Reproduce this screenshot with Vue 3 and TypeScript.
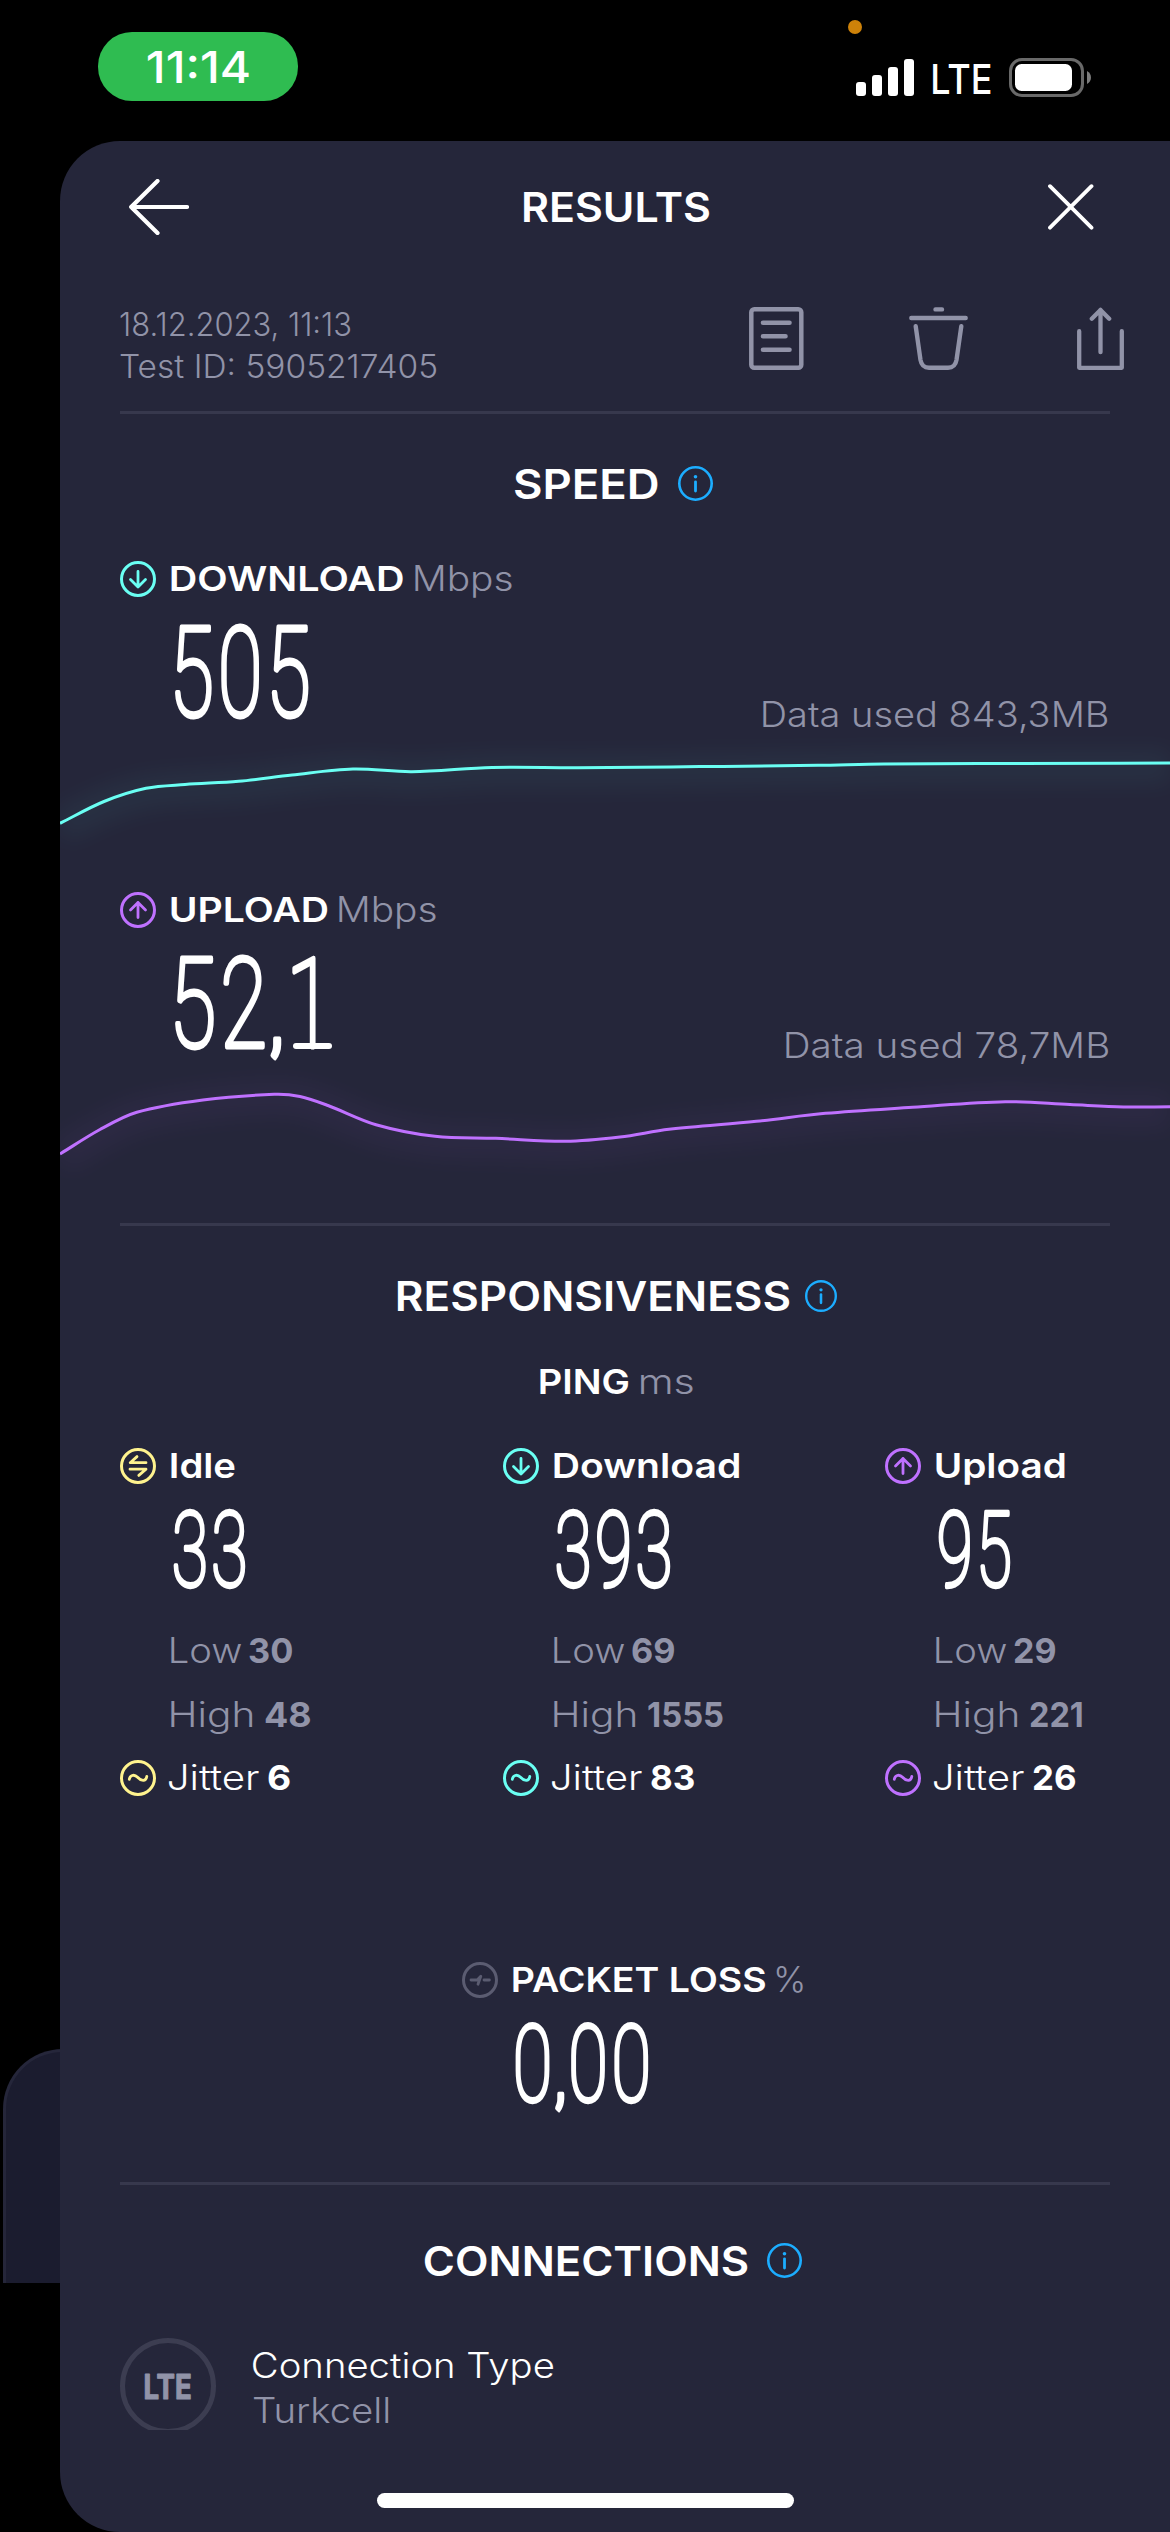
<script setup lang="ts">
import { h, type FunctionalComponent } from 'vue'

interface FitProps {
  text: string
  w: number
  cap: number
  weight?: number
  outline?: number
}

const SANS = 'Inter, "Open Sans", sans-serif'
const DIGITS = 'Roboto, Inter, sans-serif'

const pen = document.createElement('canvas').getContext('2d')!

// One line of text whose inked width is w and whose capitals are cap pixels high.
const FitText: FunctionalComponent<FitProps> = (props) => {
  const weight = props.weight ?? 400
  const size = props.cap / 0.727
  pen.font = `${weight} ${size}px ${SANS}`
  const m = pen.measureText(props.text)
  const ratio = props.w / (m.actualBoundingBoxRight + m.actualBoundingBoxLeft)
  return h(
    'svg',
    { width: props.w, height: props.cap, overflow: 'visible', style: 'display:block;flex:none' },
    [
      h(
        'text',
        {
          transform: `translate(${m.actualBoundingBoxLeft * ratio} ${props.cap}) scale(${ratio} 1)`,
          'font-family': SANS,
          'font-size': size,
          'font-weight': weight,
          fill: 'currentColor',
          stroke: props.outline ? 'currentColor' : 'none',
          'stroke-width': props.outline ?? 0,
          'stroke-linejoin': 'round',
        },
        props.text,
      ),
    ],
  )
}
FitText.props = ['text', 'w', 'cap', 'weight', 'outline']

// Tall condensed figures with rounded stroke ends and a short decimal comma.
const BigNumber: FunctionalComponent<{ text: string; w: number; cap: number; pen: number }> = (props) => {
  const edge = props.pen
  const size = (props.cap - edge) / 0.711
  const spacing = size * 0.05
  const runs = props.text.split(/(,)/).map((t) => ({
    t,
    comma: t === ',',
    size: t === ',' ? size * 0.62 : size,
    weight: t === ',' ? 400 : 100,
  }))
  let advance = 0
  let left = 0
  let right = 0
  runs.forEach((r, i) => {
    pen.font = `${r.weight} ${r.size}px ${DIGITS}`
    const m = pen.measureText(r.t)
    advance += m.width + spacing * r.t.length
    if (i === 0) left = -m.actualBoundingBoxLeft
    right = m.width - m.actualBoundingBoxRight + spacing
  })
  const ratio = (props.w - edge) / (advance - left - right)
  return h(
    'svg',
    { width: props.w, height: props.cap, overflow: 'visible', style: 'display:block;flex:none' },
    [
      h(
        'text',
        {
          transform: `translate(${edge / 2 - left * ratio} ${props.cap - edge / 2}) scale(${ratio} 1)`,
          'font-family': DIGITS,
          'font-size': size,
          'letter-spacing': spacing,
          fill: 'currentColor',
          stroke: 'currentColor',
          'stroke-width': edge,
          'stroke-linejoin': 'round',
          'vector-effect': 'non-scaling-stroke',
        },
        runs.map((r) =>
          h('tspan', { 'font-size': r.size, 'font-weight': r.weight, 'vector-effect': 'non-scaling-stroke' }, r.t),
        ),
      ),
    ],
  )
}
BigNumber.props = ['text', 'w', 'cap', 'pen']

type IconKind = 'down' | 'up' | 'idle' | 'jitter' | 'loss'
const glyphs: Record<IconKind, string> = {
  down: 'M18 10.5V26M10.5 18.5L18 26L25.5 18.5',
  up: 'M18 25.5V10.5M10.5 18L18 10.5L25.5 18',
  idle: 'M26 14.7H10.2L17 8.6M10 21.2H26L18.8 27.4',
  jitter: 'M9.3 19.3C9.8 15.6 13.8 13.4 17.6 17.3C21.6 21.7 26 21.6 26.8 16.4',
  loss: 'M9 18H15.2L18.8 14.2L16 22.2M22 18H27.4',
}
const CircleIcon: FunctionalComponent<{ kind: IconKind }> = (props) =>
  h(
    'svg',
    {
      width: 36, height: 36, viewBox: '0 0 36 36', fill: 'none', stroke: 'currentColor',
      'stroke-width': 3, 'stroke-linecap': 'round', 'stroke-linejoin': 'round',
      style: 'display:block;flex:none',
    },
    [h('circle', { cx: 18, cy: 18, r: 16.5 }), h('path', { d: glyphs[props.kind], 'stroke-width': 2.8 })],
  )
CircleIcon.props = ['kind']

const InfoIcon: FunctionalComponent<{ size: number }> = (props) =>
  h(
    'svg',
    { width: props.size, height: props.size, viewBox: '0 0 35 35', style: 'display:block;flex:none' },
    [
      h('circle', { cx: 17.5, cy: 17.5, r: 16.2, fill: 'none', stroke: '#1cadff', 'stroke-width': 2.6 }),
      h('circle', { cx: 17.5, cy: 10.7, r: 1.8, fill: '#1cadff' }),
      h('path', { d: 'M17.5 15.8V25', stroke: '#1cadff', 'stroke-width': 2.8, 'stroke-linecap': 'round' }),
    ],
  )
InfoIcon.props = ['size']

type Point = [number, number]

function smooth(points: Point[]): string {
  let d = `M${points[0][0]} ${points[0][1]}`
  for (let i = 0; i < points.length - 1; i++) {
    const a = points[Math.max(i - 1, 0)]
    const b = points[i]
    const c = points[i + 1]
    const e = points[Math.min(i + 2, points.length - 1)]
    const third = (c[0] - b[0]) / 3
    const sb = i === 0 ? (c[1] - b[1]) / (c[0] - b[0]) : (c[1] - a[1]) / (c[0] - a[0])
    const sc = (e[1] - b[1]) / (e[0] - b[0])
    d += `C${b[0] + third} ${b[1] + sb * third} ${c[0] - third} ${c[1] - sc * third} ${c[0]} ${c[1]}`
  }
  return d
}

const speeds = [
  {
    name: 'DOWNLOAD', nameW: 232.5, kind: 'down' as IconKind, tone: 'cyan', value: '505', valueW: 135, foot: false,
    used: 'Data used 843,3MB', usedW: 345,
    path: smooth([[0, 88.3], [44, 66.5], [86, 53.3], [125, 49.5], [178.6, 46.3], [232, 40], [292.9, 34], [351.8, 36.7], [432, 32.5], [518, 32.7], [640, 31.6], [758, 30.3], [823.5, 28.9], [960, 28.4], [1110, 28]]),
  },
  {
    name: 'UPLOAD', nameW: 157, kind: 'up' as IconKind, tone: 'purple', value: '52,1', valueW: 142, foot: true,
    used: 'Data used 78,7MB', usedW: 322.5,
    path: smooth([[0, 88], [40, 63.5], [76.8, 46.3], [142.9, 34], [214.3, 28.3], [240, 30.5], [268, 39.5], [316, 58.7], [375, 70.3], [435.7, 72.3], [505.4, 75.3], [560, 71], [609, 63.3], [696.3, 55.3], [765.4, 47.3], [852.6, 41.3], [945.3, 35.7], [1010, 38.6], [1063.5, 41], [1110, 40.7]]),
  },
]

const pings = [
  { name: 'Idle', nameW: 64.5, kind: 'idle' as IconKind, tone: 'yellow', value: '33', valueW: 73, low: '30', lowW: 43, high: '48', highW: 45, jitter: '6', jitterW: 21.5 },
  { name: 'Download', nameW: 185.5, kind: 'down' as IconKind, tone: 'cyan', value: '393', valueW: 115, low: '69', lowW: 42, high: '1555', highW: 75, jitter: '83', jitterW: 43 },
  { name: 'Upload', nameW: 129, kind: 'up' as IconKind, tone: 'purple', value: '95', valueW: 73, low: '29', lowW: 41, high: '221', highW: 52, jitter: '26', jitterW: 42 },
]
</script>

<template>
  <div class="screen">
    <div class="drawer"></div>
    <header class="status">
      <div class="clock"><FitText text="11:14" :w="101" :cap="32" :weight="500" /></div>
      <i class="mic"></i>
      <svg class="signal" width="58" height="37" fill="#fff">
        <rect y="23" width="10" height="14" rx="3" />
        <rect x="16" y="16" width="10" height="21" rx="3" />
        <rect x="32" y="8" width="10" height="29" rx="3" />
        <rect x="48" width="10" height="37" rx="3" />
      </svg>
      <FitText class="carrier" text="LTE" :w="58" :cap="29.7" :weight="500" />
      <svg class="battery" width="82" height="39">
        <rect x="1.5" y="1.5" width="72" height="36" rx="11.5" fill="none" stroke="#696969" stroke-width="3" />
        <rect x="6" y="6" width="57" height="27" rx="6.5" fill="#fff" />
        <path d="M78 13C83.3 15.5 83.3 23.5 78 26Z" fill="#7d7d7d" />
      </svg>
    </header>

    <main class="sheet">
      <div class="content">
        <div class="titlebar">
          <svg width="60" height="56" class="line-icon"><path d="M28.5 2L2.2 28L28.5 54M2.2 28H58" stroke-width="4.2" /></svg>
          <FitText class="title" text="RESULTS" :w="186.5" :cap="29.6" :weight="600" />
          <svg width="46" height="46" class="line-icon close"><path d="M2 2.2L43.5 43.7M43.5 2.2L2 43.7" stroke-width="3.8" /></svg>
        </div>

        <div class="meta">
          <div class="stamp">
            <FitText text="18.12.2023, 11:13" :w="230.5" :cap="23.3" :weight="350" />
            <FitText text="Test ID: 5905217405" :w="316" :cap="23.3" :weight="350" />
          </div>
          <svg width="55" height="63" class="line-icon doc"><rect x="2.3" y="2.3" width="50" height="58.4" rx="3" stroke-width="4.5" /><path d="M14 15.7H40.5M14 29.2H36.5M14 42.7H40.5" stroke-width="4.6" /></svg>
          <svg width="59" height="63" class="line-icon trash"><path d="M26.5 2.4H33M2.3 11H56.7M6.7 19.3L11.5 53Q12.8 60.7 20 60.7H39Q46.2 60.7 47.5 53L52.3 19.3" stroke-width="4.4" /></svg>
          <svg width="47" height="63" class="line-icon share"><path d="M2.2 24.2V60.8H44.8V24.2M23.5 3V45.2M14.8 11.8L23.5 2.9L32.2 11.8" stroke-width="4.3" /></svg>
        </div>
        <hr />

        <div class="heading speed-heading">
          <FitText text="SPEED" :w="144" :cap="29.6" :weight="600" />
          <InfoIcon :size="35" />
        </div>

        <section v-for="s in speeds" :key="s.name" class="speed">
          <div class="label">
            <CircleIcon :kind="s.kind" :class="s.tone" />
            <FitText class="name" :text="s.name" :w="s.nameW" :cap="25.2" :weight="600" />
            <FitText class="unit" text="Mbps" :w="96.5" :cap="25.2" :weight="300" />
          </div>
          <div class="reading">
            <div class="big" :class="{ foot: s.foot }"><BigNumber :text="s.value" :w="s.valueW" :cap="92" :pen="4.2" /></div>
            <FitText class="used" :text="s.used" :w="s.usedW" :cap="25.2" :weight="300" />
          </div>
          <svg class="chart" :class="s.tone" width="1110" height="150" viewBox="0 0 1110 150" fill="none" stroke="currentColor">
            <path class="glow" :d="s.path" transform="translate(0 4)" />
            <path :d="s.path" stroke-width="3" />
          </svg>
        </section>
        <hr />

        <div class="heading resp-heading">
          <FitText text="RESPONSIVENESS" :w="392.5" :cap="29.6" :weight="600" />
          <InfoIcon :size="32" />
        </div>
        <div class="ping-heading">
          <FitText text="PING" :w="89" :cap="25.2" :weight="600" />
          <FitText class="unit" text="ms" :w="52.5" :cap="25.2" :weight="300" />
        </div>

        <div class="pings">
          <section v-for="p in pings" :key="p.name">
            <div class="label">
              <CircleIcon :kind="p.kind" :class="p.tone" />
              <FitText class="name" :text="p.name" :w="p.nameW" :cap="25.2" :weight="600" />
            </div>
            <BigNumber class="value" :text="p.value" :w="p.valueW" :cap="78" :pen="3.7" />
            <div class="stat low"><FitText text="Low" :w="70" :cap="25.2" :weight="300" /><FitText :text="p.low" :w="p.lowW" :cap="25.2" :weight="700" /></div>
            <div class="stat high"><FitText text="High" :w="81.5" :cap="25.2" :weight="300" /><FitText :text="p.high" :w="p.highW" :cap="25.2" :weight="700" /></div>
            <div class="label jitter">
              <CircleIcon kind="jitter" :class="p.tone" />
              <FitText class="jit" text="Jitter" :w="90" :cap="25.2" :weight="350" />
              <FitText class="jitval" :text="p.jitter" :w="p.jitterW" :cap="25.2" :weight="700" />
            </div>
          </section>
        </div>

        <section class="loss">
          <div class="label">
            <CircleIcon kind="loss" class="dim" />
            <FitText class="name" text="PACKET LOSS" :w="252" :cap="25.2" :weight="600" />
            <FitText class="unit" text="%" :w="26.7" :cap="25.2" :weight="300" />
          </div>
          <BigNumber class="value" text="0,00" :w="134" :cap="78.5" :pen="3.7" />
        </section>
        <hr />

        <div class="heading conn-heading">
          <FitText text="CONNECTIONS" :w="322.5" :cap="29.6" :weight="600" />
          <InfoIcon :size="35" />
        </div>
        <div class="connection">
          <div class="badge-clip">
            <div class="badge"><FitText text="LTE" :w="46" :cap="25" :weight="700" :outline="1.2" /></div>
          </div>
          <div class="carrier-info">
            <FitText text="Connection Type" :w="300.7" :cap="25.2" :weight="350" />
            <FitText class="provider" text="Turkcell" :w="136" :cap="25.2" :weight="300" />
          </div>
        </div>
      </div>
      <div class="home"></div>
    </main>
  </div>
</template>

<style>
body { background: #000; }
</style>

<style scoped>
.screen { position: relative; width: 1170px; height: 2532px; overflow: hidden; background: #000; color: #fff; }
.status { display: flex; height: 141px; position: relative; box-sizing: border-box; padding-left: 98px; }
.clock { width: 200px; height: 69px; margin-top: 32px; border-radius: 34px; background: #2fbc51; display: flex; align-items: center; justify-content: center; }
.mic { position: absolute; left: 848px; top: 20px; width: 14px; height: 14px; border-radius: 50%; background: #cd8209; }
.signal { margin: 59px 0 0 558px; }
.carrier { margin: 64px 0 0 19px; }
.battery { margin: 58px 0 0 18px; }
.drawer { position: absolute; left: 3px; top: 2049px; width: 120px; height: 234px; box-sizing: border-box; border: 3px solid #25263a; border-bottom: 0; border-radius: 60px 0 0 0; background: #1b1c2f; }
.sheet { position: relative; width: 1110px; height: 2391px; margin-left: 60px; background: #25263a; border-radius: 60px 0 0 60px; overflow: hidden; }
.content { height: 2289px; }
.line-icon { display: block; flex: none; fill: none; stroke: currentColor; stroke-linecap: round; stroke-linejoin: round; }
.titlebar { display: flex; align-items: center; height: 132px; padding: 0 76px 0 69px; }
.title { margin-left: 334px; }
.close { margin-left: auto; }
.meta { display: flex; height: 138px; box-sizing: border-box; padding: 34px 46px 0 60px; color: #9193a8; }
.stamp { width: 629px; display: flex; flex-direction: column; gap: 19px; padding-top: 6px; }
.trash { margin-left: 105px; }
.share { margin-left: 109px; }
hr { height: 3px; margin: 0 60px; border: 0; background: #37384d; }
.heading { display: flex; align-items: center; }
.speed-heading { height: 35px; margin: 52px 0 60px 454px; gap: 20px; }
.speed { height: 331px; }
.label { display: flex; align-items: center; height: 36px; padding-left: 60px; }
.name { margin-left: 15px; }
.unit { margin-left: 11px; color: #9193a8; }
.reading { display: flex; justify-content: space-between; height: 138px; padding: 0 62px 0 114px; }
.big { position: relative; height: 92px; margin-top: 29px; }
.foot::after { content: ""; position: absolute; left: 119px; top: 86px; width: 39px; height: 6px; border-radius: 3px; background: #fff; }
.used { margin-top: 105px; color: #9193a8; }
.chart { display: block; }
.glow { stroke-width: 34px; opacity: .045; filter: blur(11px); }
.cyan { color: #6afff3; }
.purple { color: #bf71ff; }
.yellow { color: #fff38e; }
.dim { color: #5b5c71; }
.resp-heading { height: 32px; margin: 54px 0 0 337px; gap: 15px; }
.ping-heading { display: flex; height: 25px; margin: 57px 0 0 480px; }
.pings { display: grid; grid-template-columns: 383px 382px 1fr; margin-top: 54px; }
.value { margin: 26px 0 0 113px; }
.stat { display: flex; height: 25px; margin-left: 111px; color: #9193a8; }
.low { margin-top: 50px; gap: 8px; }
.high { margin-top: 39px; gap: 12px; }
.jitter { margin-top: 33px; }
.jit { margin-left: 13px; }
.jitval { margin-left: 9px; }
.loss { margin: 166px 0 0 342px; height: 220px; }
.conn-heading { height: 35px; margin: 58px 0 0 365px; gap: 19px; }
.connection { display: flex; margin: 60px 0 0 60px; }
.badge-clip { height: 92px; overflow: hidden; }
.badge { width: 96px; height: 96px; box-sizing: border-box; border: 5px solid #3c3d51; border-radius: 50%; color: #9193a8; display: flex; align-items: center; justify-content: center; }
.carrier-info { display: flex; flex-direction: column; gap: 20px; padding: 15px 0 0 37px; }
.provider { color: #9193a8; }
.home { width: 417px; height: 15px; margin: 63px 0 0 317px; border-radius: 8px; background: #fff; }
</style>
